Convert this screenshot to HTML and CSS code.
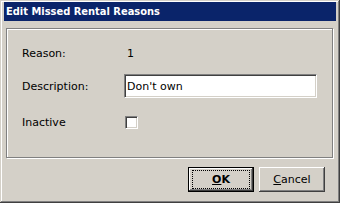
FILE: index.html
```html
<!DOCTYPE html>
<html lang="en">
<head>
    <meta charset="UTF-8">
    <title>Edit Missed Rental Reasons</title>
    <link rel="stylesheet" href="styles.css">
</head>
<body>
<div class="window">
    <div class="title">Edit Missed Rental Reasons</div>
    <div class="content">
        <div class="group">
            <div class="row row-reason">
                <span class="label">Reason:</span>
                <span class="value">1</span>
            </div>
            <div class="row row-desc">
                <label class="label" for="description">Description:</label>
                <input type="text" id="description" class="field" value="Don't own"/>
            </div>
            <div class="row row-inactive">
                <label class="label" for="inactive">Inactive</label>
                <span class="check" id="inactive"></span>
            </div>
        </div>
        <div class="buttons">
            <button class="btn btn-default"><span class="focus"><u>O</u>K</span></button>
            <button class="btn"><span><u>C</u>ancel</span></button>
        </div>
    </div>
</div>
</body>
</html>
```

FILE: styles.css
```css
* {
    font-family: "DejaVu Sans", sans-serif;
    box-sizing: border-box;
}

body {
    margin: 0;
    background: #d4d0c8;
    font-size: 11px;
    color: #000;
}

.window {
    width: 340px;
    height: 203px;
    padding: 2px 4px 0 4px;
    background: #d4d0c8;
    box-shadow: inset -1px -1px #404040, inset 1px 1px #d4d0c8, inset -2px -2px #808080, inset 2px 2px #fff;
    display: flex;
    flex-direction: column;
}

.title {
    height: 19px;
    background: #0a246a;
    color: #fff;
    font-family: "DejaVu Sans Condensed", "Liberation Sans", sans-serif;
    font-weight: bold;
    font-size: 11px;
    line-height: 19px;
    padding-left: 2px;
}

.content {
    flex: 1;
    display: flex;
    flex-direction: column;
}

.group {
    margin: 7px 3px 0 2px;
    height: 130px;
    border: 1px solid #808080;
    box-shadow: inset 1px 1px #fff, 1px 1px #fff;
    padding: 15px 0 0 15px;
}

.row {
    display: flex;
    align-items: center;
}

.row-reason {
    height: 18px;
}

.row-desc {
    height: 24px;
    margin-top: 12px;
}

.row-inactive {
    height: 14px;
    margin-top: 17px;
}

.label {
    width: 102px;
}

.value {
    padding-left: 3px;
}

.field {
    width: 193px;
    height: 24px;
    margin: 0;
    padding: 0 2px;
    font-size: 11px;
    background: #fff;
    border: 1px solid;
    border-color: #808080 #fff #fff #808080;
    box-shadow: inset 1px 1px #404040, inset -1px -1px #d4d0c8;
    outline: none;
}

.check {
    width: 13px;
    height: 13px;
    margin-left: 1px;
    background: #fff;
    border: 1px solid;
    border-color: #808080 #fff #fff #808080;
    box-shadow: inset 1px 1px #404040, inset -1px -1px #d4d0c8;
}

.buttons {
    display: flex;
    justify-content: flex-end;
    gap: 5px;
    margin-top: 9px;
    padding-right: 11px;
}

.btn {
    width: 66px;
    height: 25px;
    margin: 0;
    padding: 0;
    font-size: 11px;
    background: #d4d0c8;
    color: #000;
    border: none;
    box-shadow: inset -1px -1px #404040, inset 1px 1px #fff, inset -2px -2px #808080;
    display: flex;
    align-items: center;
    justify-content: center;
}

.btn-default {
    border: 1px solid #000;
    font-weight: bold;
}

.focus {
    width: 58px;
    height: 19px;
    border: 1px dotted #000;
    display: flex;
    align-items: center;
    justify-content: center;
}
```
